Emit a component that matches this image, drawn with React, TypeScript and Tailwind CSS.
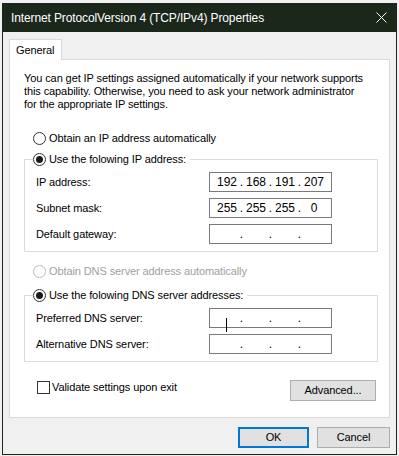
import React from "react";

const font = { fontFamily: '"Liberation Sans", Arial, sans-serif' };

function Radio({ checked, disabled }: { checked?: boolean; disabled?: boolean }) {
  return (
    <span
      className={`flex h-[13px] w-[13px] shrink-0 items-center justify-center rounded-full border bg-white ${
        disabled ? "border-[#bcbcbc]" : "border-[#333333]"
      }`}
    >
      {checked && <span className="block h-[7px] w-[7px] rounded-full bg-[#1a1a1a]" />}
    </span>
  );
}

function IpInput({ parts, caret }: { parts: string[]; caret?: boolean }) {
  return (
    <div className="flex h-[20px] w-[123px] items-center border border-[#7a7a7a] bg-white pl-[6px] text-[12px] leading-[14px] tracking-normal text-black">
      {parts.map((p, i) => (
        <React.Fragment key={i}>
          <span className="relative flex w-[22px] justify-center">
            {caret && i === 0 && <span className="absolute left-[10px] top-0 h-[14px] w-px bg-black" />}
            {p}
          </span>
          {i < 3 && <span className="flex w-[7px] justify-center">.</span>}
        </React.Fragment>
      ))}
    </div>
  );
}

function Row({ label, parts, caret }: { label: string; parts: string[]; caret?: boolean }) {
  return (
    <div className="flex h-[20px] items-center pl-[11px]">
      <span className="w-[173px] whitespace-nowrap">{label}</span>
      <IpInput parts={parts} caret={caret} />
    </div>
  );
}

export default function App() {
  return (
    <div
      className="h-[456px] w-[399px] bg-[#f0f0f0] pl-[2px] pt-[3px] text-[11px] leading-[13px] tracking-[-0.1px] text-black"
      style={font}
    >
      <div className="flex h-[452px] w-[395px] flex-col border border-[#1c271c] bg-[#f0f0f0]">
        {/* Title bar */}
        <div className="flex h-[28px] shrink-0 items-center justify-between bg-[#1c271c] pl-[8px] pr-[9px] text-white">
          <span className="whitespace-nowrap text-[12px] leading-none tracking-[-0.12px]">
            Internet ProtocolVersion 4 (TCP/IPv4) Properties
          </span>
          <svg width="11" height="11" viewBox="0 0 11 11" className="mb-[1px]">
            <path d="M0.5 0.5 L10.5 10.5 M10.5 0.5 L0.5 10.5" stroke="white" strokeWidth="1" />
          </svg>
        </div>

        {/* Body */}
        <div className="flex flex-col pl-[6px] pt-[7px]">
          {/* Tab */}
          <div className="relative z-10 -mb-px flex h-[21px] w-[53px] items-center border border-b-0 border-[#d9d9d9] bg-white pl-[6px]">
            General
          </div>
          {/* Panel */}
          <div className="flex h-[359px] w-[381px] flex-col border border-[#d9d9d9] bg-white pl-[14px] pt-[12px]">
            <p className="whitespace-nowrap leading-[13px]">
              You can get IP settings assigned automatically if your network supports
              <br />
              this capability. Otherwise, you need to ask your network administrator
              <br />
              for the appropriate IP settings.
            </p>

            <div className="ml-[9px] mt-[21px] flex h-[13px] items-center gap-[3px] whitespace-nowrap">
              <Radio />
              <span>Obtain an IP address automatically</span>
            </div>

            {/* Group 1 */}
            <div className="mt-[14px] flex h-[93px] w-[354px] flex-col border border-[#dcdcdc]">
              <div className="-mt-[7px] ml-[8px] flex h-[13px] w-fit items-center gap-[3px] whitespace-nowrap bg-white pr-[4px]">
                <Radio checked />
                <span>Use the folowing IP address:</span>
              </div>
              <div className="mt-[6px] flex flex-col gap-[6px]">
                <Row label="IP address:" parts={["192", "168", "191", "207"]} />
                <Row label="Subnet mask:" parts={["255", "255", "255", "0"]} />
                <Row label="Default gateway:" parts={["", "", "", ""]} />
              </div>
            </div>

            <div className="ml-[9px] mt-[13px] flex h-[13px] items-center gap-[3px] whitespace-nowrap text-[#a0a0a0]">
              <Radio disabled />
              <span>Obtain DNS server address automatically</span>
            </div>

            {/* Group 2 */}
            <div className="mt-[17px] flex h-[67px] w-[354px] flex-col border border-[#dcdcdc]">
              <div className="-mt-[7px] ml-[8px] flex h-[13px] w-fit items-center gap-[3px] whitespace-nowrap bg-white pr-[4px]">
                <Radio checked />
                <span>Use the folowing DNS server addresses:</span>
              </div>
              <div className="mt-[6px] flex flex-col gap-[6px]">
                <Row label="Preferred DNS server:" parts={["", "", "", ""]} caret />
                <Row label="Alternative DNS server:" parts={["", "", "", ""]} />
              </div>
            </div>

            <div className="mt-[18px] flex w-[352px] items-start justify-between">
              <div className="ml-[13px] mt-[1px] flex h-[13px] items-center gap-[2px] whitespace-nowrap">
                <span className="h-[13px] w-[13px] border border-[#333333] bg-white" />
                <span>Validate settings upon exit</span>
              </div>
              <button className="flex h-[21px] w-[86px] items-center justify-center border border-[#adadad] bg-[#e1e1e1]">
                Advanced...
              </button>
            </div>
          </div>

          {/* Footer */}
          <div className="mt-[9px] flex w-[381px] justify-end gap-[8px]">
            <button className="flex h-[21px] w-[71px] items-center justify-center border-2 border-[#0078d7] bg-[#e1e1e1]">
              OK
            </button>
            <button className="flex h-[21px] w-[73px] items-center justify-center border border-[#adadad] bg-[#e1e1e1]">
              Cancel
            </button>
          </div>
        </div>
      </div>
    </div>
  );
}
